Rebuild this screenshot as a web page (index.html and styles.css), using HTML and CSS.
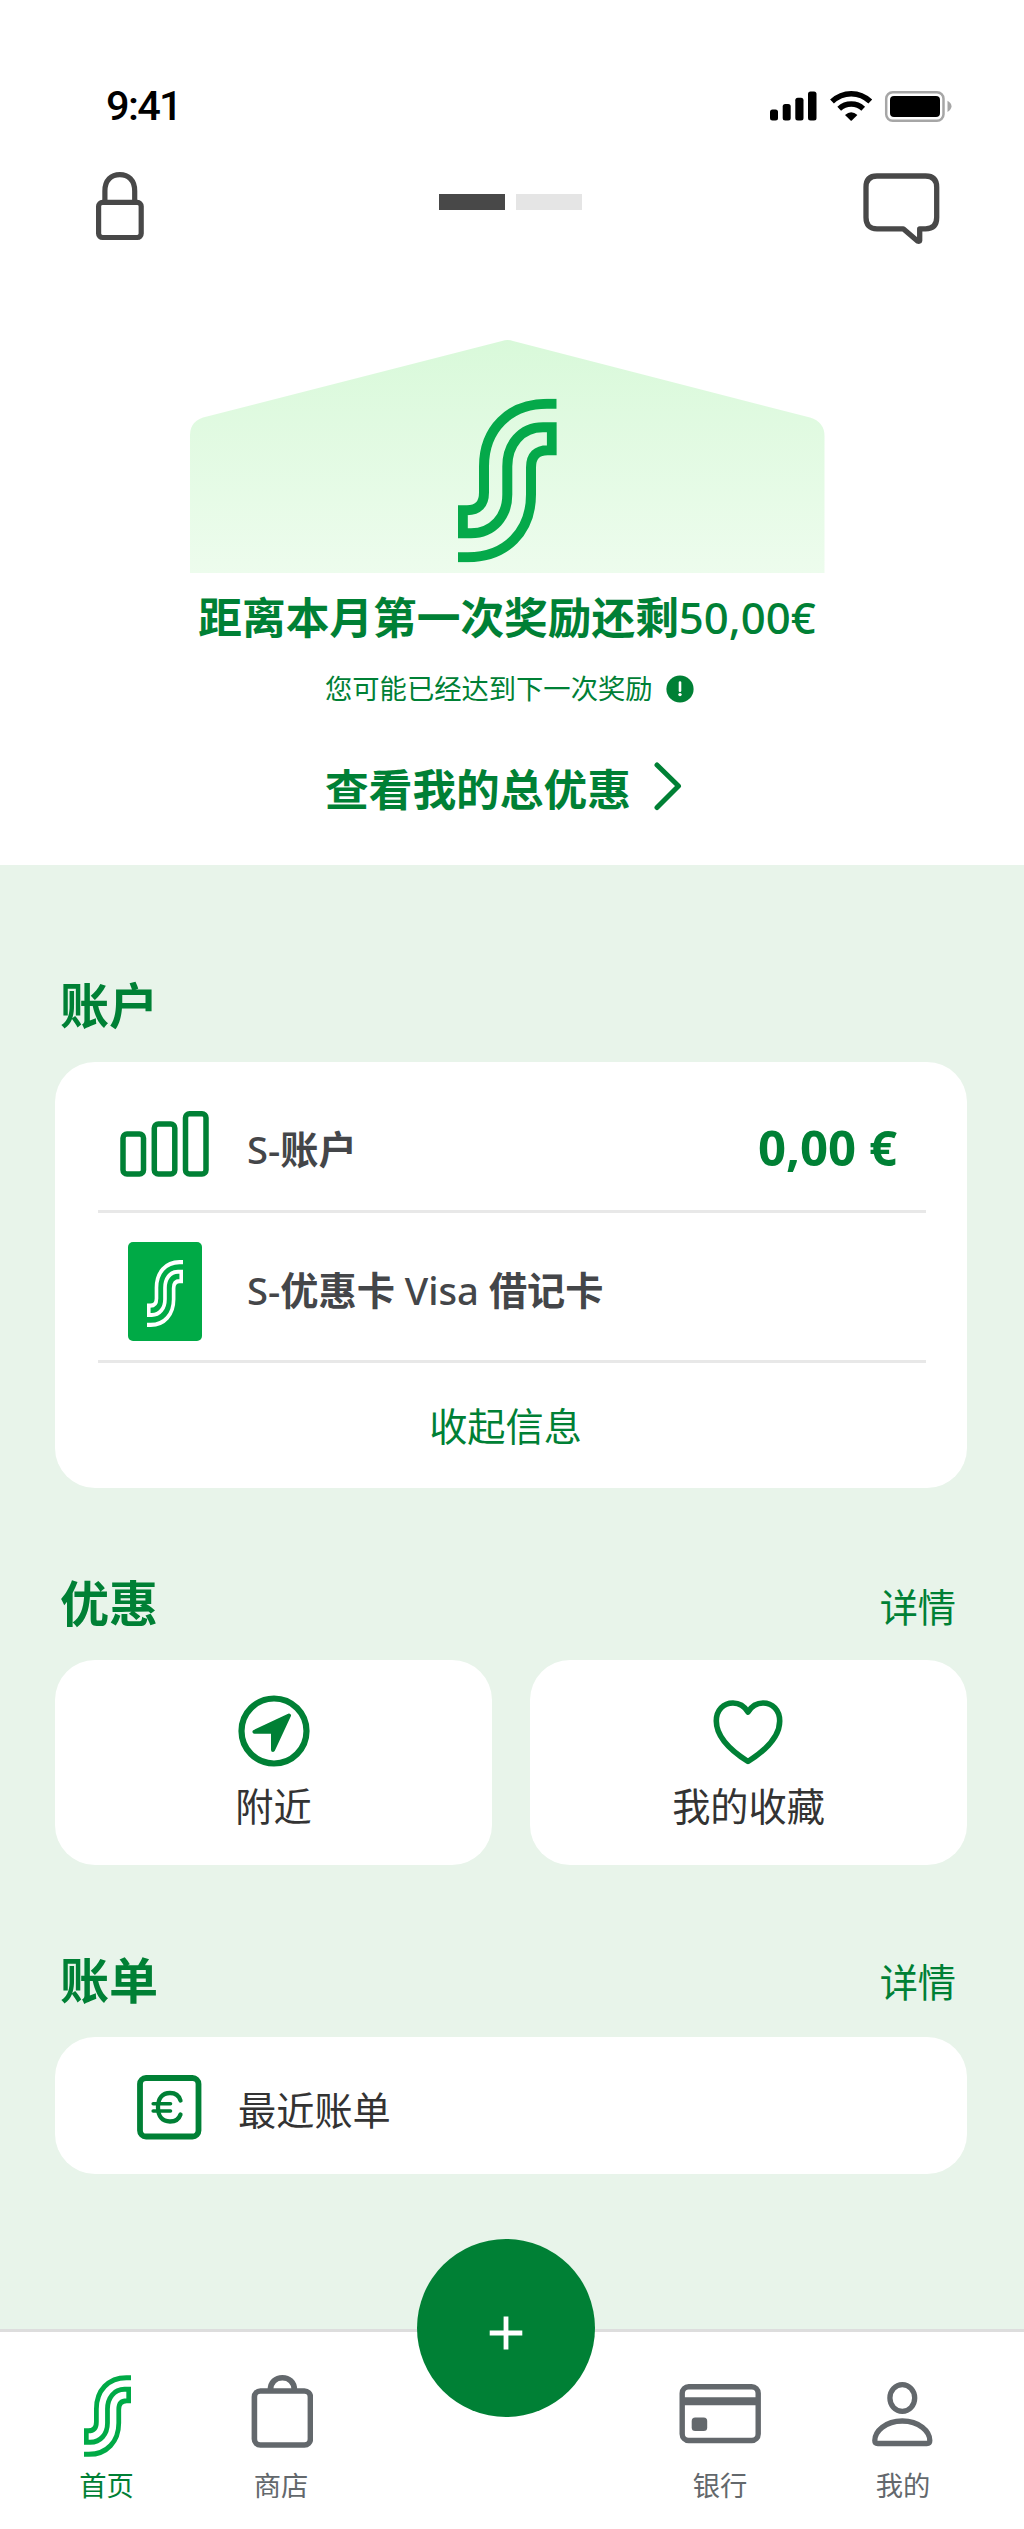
FILE: index.html
```html
<!DOCTYPE html>
<html lang="zh-CN">
<head>
<meta charset="utf-8">
<title>首页</title>
<link rel="stylesheet" href="styles.css">
</head>
<body>
<svg class="defs" width="0" height="0" aria-hidden="true">
  <symbol id="s-mark" viewBox="0 0 98.7 164" preserveAspectRatio="none">
    <path d="M98.7 5.3H89C51 5.3 26 31 26 68V94C26 106 20 111.7 9 111.7H4.8V134.7H13C35 134.7 49.3 118 49.3 96V68C49.3 46 63 28.7 85 28.7H93.9V51.7H89.7C79 51.7 73 57 73 69V96C73 133 48 158.7 10 158.7H0" fill="none" stroke="currentColor" stroke-width="10"/>
  </symbol>
</svg>
<main class="screen">
  <section class="top">
    <div class="status">
      <span class="time">9:41</span>
      <svg class="status-icons" width="184" height="34" viewBox="0 0 184 34">
        <rect x="1" y="19.500" width="8" height="11" rx="2.500"/>
        <rect x="13.700" y="14" width="8" height="16.500" rx="2.500"/>
        <rect x="26.300" y="7.700" width="8.200" height="22.800" rx="2.500"/>
        <rect x="39" y="1.500" width="8.500" height="29" rx="2.500"/>
        <g fill="none" stroke="#000" stroke-width="5.500">
          <path d="M63 11.500C74 1 90.500 1 101.300 11.500"/>
          <path d="M70.200 18.700C77 12.500 87.500 12.500 94.200 18.700"/>
        </g>
        <path d="M76 25Q82.200 19.500 88.400 25L82.800 30.500Q82.200 31 81.600 30.500Z"/>
        <rect x="117.200" y="2.200" width="57.300" height="28.500" rx="6.500" fill="none" stroke="#a6a6a6" stroke-width="2.500"/>
        <rect x="121" y="6" width="50" height="21" rx="4"/>
        <path d="M178.500 10.800Q182.500 13 182.500 16.300T178.500 22Z" fill="#a6a6a6"/>
      </svg>
    </div>
    <div class="toolbar">
      <svg width="48" height="80" viewBox="0 0 48 80" fill="none" stroke="#484848" stroke-width="5.200">
        <rect x="2.600" y="36.300" width="42.600" height="35.200" rx="4"/>
        <path d="M8.900 36V25C8.900 14 15.500 8.600 23.800 8.600S38.700 14 38.700 25V36"/>
      </svg>
      <div class="pager"><i class="on"></i><i></i></div>
      <svg width="78" height="80" viewBox="0 0 78 80" fill="none" stroke="#484848" stroke-width="5.300" stroke-linejoin="round">
        <path d="M14 10H62.500Q73.700 10 73.700 21.200V51.500Q73.700 62.800 62.500 62.800H56.700V74.500Q56.500 75.800 54.500 75L40.200 62.800H14Q3 62.800 3 51.500V21.200Q3 10 14 10Z"/>
      </svg>
    </div>
    <div class="hero">
      <svg class="house" width="636" height="234" viewBox="0 0 636 234">
        <defs><linearGradient id="hg" x1="0" y1="0" x2="0" y2="1"><stop offset="0" stop-color="#d9f9da"/><stop offset="1" stop-color="#edfced"/></linearGradient></defs>
        <path d="M0 233V95Q0 80 17 76.500L312 1Q317.500 -1 323 1L620 77.500Q634.500 82 634.500 96V233Z" fill="url(#hg)"/>
        <svg x="268" y="58.500" width="98.700" height="164" class="mark"><use href="#s-mark"/></svg>
      </svg>
    </div>
    <h1 class="headline">距离本月第一次奖励还剩<span>50,00€</span></h1>
    <p class="note">您可能已经达到下一次奖励
      <svg width="28" height="28" viewBox="0 0 28 28"><circle cx="14" cy="14" r="13.600" fill="#008035"/><path d="M14 7.500V15.800" stroke="#fff" stroke-width="2.600" stroke-linecap="round"/><circle cx="14" cy="19.600" r="1.700" fill="#fff"/></svg>
    </p>
    <a class="more">查看我的总优惠
      <svg width="30" height="50" viewBox="0 0 30 50"><path d="M4 4L25.500 25L4 46.500" fill="none" stroke="#008035" stroke-width="5" stroke-linecap="round" stroke-linejoin="round"/></svg>
    </a>
  </section>

  <section class="body">
    <header class="head accounts-head"><h2>账户</h2></header>
    <div class="card accounts">
      <div class="row first">
        <div class="ico"><svg width="90" height="67" viewBox="0 0 90 67" fill="none" stroke="#008035" stroke-width="5.500">
          <rect x="3" y="23" width="20.500" height="40" rx="4"/><rect x="34.300" y="13" width="20.500" height="50" rx="4"/><rect x="65.500" y="2.800" width="20.500" height="60.200" rx="4"/></svg></div>
        <span class="name">S-<b>账户</b></span><b class="amount">0,00 €</b>
      </div>
      <div class="row second">
        <div class="ico"><span class="bonus"><svg width="36" height="67"><use href="#s-mark" width="36" height="67"/></svg></span></div>
        <span class="name">S-<b>优惠卡</b> Visa <b>借记卡</b></span>
      </div>
      <a class="fold">收起信息</a>
    </div>

    <header class="head offers"><h2>优惠</h2><a>详情</a></header>
    <div class="tiles">
      <div class="card tile">
        <svg width="72" height="72" viewBox="0 0 72 72"><circle cx="36" cy="36" r="32.500" fill="none" stroke="#008035" stroke-width="6.200"/><path d="M51 20.500L16.500 36.800H35V55Z" fill="#008035" stroke="#008035" stroke-width="4" stroke-linejoin="round"/></svg>
        <span>附近</span>
      </div>
      <div class="card tile fav">
        <svg width="72" height="72" viewBox="0 0 72 72"><path d="M36 17C32 10.500 27 8 21 8C11.500 8 4.300 15 4.300 26C4.300 40.500 17 54.500 36 66.500C55 54.500 67.700 40.500 67.700 26C67.700 15 60.500 8 51 8C45 8 40 10.500 36 17Z" fill="none" stroke="#008035" stroke-width="5.600" stroke-linejoin="round"/></svg>
        <span>我的收藏</span>
      </div>
    </div>

    <header class="head bills"><h2>账单</h2><a>详情</a></header>
    <div class="card bill">
      <svg width="65" height="65" viewBox="0 0 65 65" fill="none" stroke="#008035" stroke-linecap="round">
        <rect x="3" y="3" width="58.500" height="58.500" rx="6" stroke-width="5.800"/>
        <path d="M43.500 25.500C42 20.500 38.500 18 33 18C25.500 18 21 23 21 32.300S25.500 46.500 33 46.500C38.500 46.500 42 44 43.500 39.500" stroke-width="4.300"/>
        <path d="M16.200 28.800H33.500M16.200 36H33.500" stroke-width="3.600"/>
      </svg>
      <span>最近账单</span>
    </div>
  </section>

  <nav class="nav">
    <a class="item active"><svg class="home" width="47" height="82"><use href="#s-mark" width="47" height="82"/></svg>首页</a>
    <a class="item"><svg width="64" height="82" viewBox="0 0 64 82" fill="none" stroke="#63686c" stroke-width="5.600"><rect x="5.400" y="16" width="56" height="54" rx="6"/><path d="M21.400 15C21.400 7 26.900 2.800 33.400 2.800S45.400 7 45.400 15"/></svg>商店</a>
    <a class="fab" aria-label="新增"><svg width="34" height="34" viewBox="0 0 34 34"><path d="M17 .5V33.500M.7 17H33.300" stroke="#fff" stroke-width="4.800"/></svg></a>
    <a class="item"><svg width="82" height="82" viewBox="0 0 82 82" fill="none" stroke="#63686c" stroke-width="5.400"><rect x="3.200" y="11.700" width="76" height="53.800" rx="6.500"/><path d="M3 26.300H79" stroke-width="8"/><rect x="12.700" y="42.500" width="15.500" height="13.500" rx="3.500" fill="#63686c" stroke="none"/></svg>银行</a>
    <a class="item"><svg width="62" height="82" viewBox="0 0 62 82" fill="none" stroke="#63686c" stroke-width="5.300"><ellipse cx="30.300" cy="23" rx="12.400" ry="13.400"/><path d="M30.300 46C13.300 46 2.800 56.500 2.800 65.500Q2.800 68.500 5.800 68.500H54.800Q57.800 68.500 57.800 65.500C57.800 56.500 47.300 46 30.300 46Z"/></svg>我的</a>
  </nav>
</main>
</body>
</html>
```
FILE: styles.css
```css
* { box-sizing: border-box; margin: 0; padding: 0; }
body {
  width: 1024px;
  background: #fff;
  font-family: "Noto Sans", "Noto Sans CJK SC", sans-serif;
  color: #333;
}
.defs { display: block; height: 0; }
svg { display: block; flex: none; }
.screen { display: flex; flex-direction: column; height: 2529px; overflow: hidden; }

.top { height: 865px; display: flex; flex-direction: column; align-items: center; color: #008035; }
.status { align-self: stretch; margin-top: 80px; height: 52px; padding: 0 71px 0 106px; display: flex; justify-content: space-between; align-items: center; }
.status-icons { margin-top: 1px; }
.time { font: 500 41.5px/52px Roboto, sans-serif; letter-spacing: -1.7px; color: #000; }
.toolbar { align-self: stretch; height: 80px; margin-top: 34px; padding: 0 83px 0 96px; display: flex; justify-content: space-between; }
.pager { display: flex; gap: 11px; padding-top: 28px; margin-left: 14px; }
.pager i { width: 66px; height: 16px; background: #e5e5e5; }
.pager .on { background: #484848; }
.hero { margin-top: 94px; margin-left: -8px; }
.house { overflow: visible; }
.mark { color: #05a94a; }
.headline { margin: 13px 10px 0 0; font-size: 43.7px; line-height: 60px; font-weight: 700; white-space: nowrap; }
.headline span { font-weight: 500; }
.note { align-self: flex-start; margin: 22px 0 0 325px; display: flex; align-items: center; gap: 13px; font-size: 27.3px; line-height: 40px; }
.more { align-self: flex-start; margin: 50px 0 0 325px; display: flex; align-items: center; gap: 22px; font-size: 43.7px; line-height: 60px; font-weight: 700; }
.more svg { margin-top: -7px; }

.body { height: 1464px; background: #e8f4ea; padding: 107px 57px 0 55px; }
.head { height: 66px; padding: 0 11px 0 5px; display: flex; justify-content: space-between; color: #008035; }
.head h2 { font-size: 49.1px; line-height: 66px; font-weight: 700; }
.head a { font-size: 38.2px; line-height: 74px; }
.bills a { line-height: 71px; }
.card { background: #fff; border-radius: 40px; }
.accounts { margin-top: 24px; height: 426px; padding: 0 41px 0 43px; color: #444649; }
.row { display: flex; align-items: center; border-bottom: 3px solid #e8e8e8; font-size: 38.2px; }
.first { height: 151px; padding-top: 22px; }
.first .ico { margin-top: -5px; }
.second { height: 150px; padding-top: 9px; }
.second .name { margin-top: -5px; }
.ico { width: 134px; margin-right: 15px; display: flex; justify-content: center; }
.name { font-weight: 500; }
.name b { font-weight: 700; }
.amount { margin-left: auto; padding-right: 29px; font-size: 49.1px; line-height: 60px; font-weight: 700; color: #008035; }
.bonus { width: 74px; height: 99px; border-radius: 5px; background: #00aa46; color: #fff; display: flex; align-items: center; justify-content: center; padding-top: 5px; }
.fold { display: block; margin-top: 38px; text-align: center; font-size: 38.2px; line-height: 50px; color: #008035; padding-right: 13px; }
.offers { margin-top: 82px; }
.tiles { margin-top: 24px; display: flex; gap: 38px; }
.tile { flex: 1; height: 205px; padding-top: 35px; display: flex; flex-direction: column; align-items: center; font-size: 38.2px; line-height: 50px; }
.tile span { margin-top: 14px; }
.fav svg { margin-right: 2px; }
.bills { margin-top: 82px; }
.bill { margin-top: 24px; height: 137px; padding-left: 82px; display: flex; align-items: center; gap: 36px; font-size: 38.2px; }
.bill span { margin-top: 5px; }
.bill svg { margin-top: 4px; }

.nav { height: 200px; background: #fff; border-top: 3px solid #ddd; padding-left: 4px; display: grid; grid-template-columns: 205px 144px 305px 124px 242px; }
.item { display: flex; flex-direction: column; align-items: center; padding-top: 43px; font-size: 27.3px; line-height: 40px; color: #63686c; }
.item svg { margin-bottom: 9px; }
.item.active { color: #008035; }
.item .home { color: #00aa46; margin-left: 2px; }
.fab { justify-self: center; width: 178px; height: 178px; margin-top: -93px; border-radius: 50%; background: #008035; display: flex; align-items: center; justify-content: center; padding-top: 9px; }
```
